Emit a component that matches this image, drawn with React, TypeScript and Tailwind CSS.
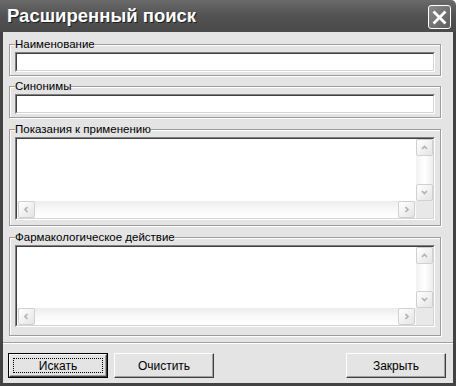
import React from 'react';

const font = "font-['Liberation_Sans',Arial,sans-serif]";

const Chevron = ({ dir }: { dir: 'up' | 'down' | 'left' | 'right' }) => {
  const pts = {
    up: '1,5 3.5,2.5 6,5',
    down: '1,2 3.5,4.5 6,2',
    left: '4.5,1 2,3.5 4.5,6',
    right: '2.5,1 5,3.5 2.5,6',
  }[dir];
  return (
    <svg width="7" height="7" viewBox="0 0 7 7">
      <polyline points={pts} fill="none" stroke="#b2b2b2" strokeWidth="1.7" />
    </svg>
  );
};

const ScrollBtn = ({ dir }: { dir: 'up' | 'down' | 'left' | 'right' }) => (
  <div className="w-[17px] h-[17px] shrink-0 rounded-[2px] border border-[#d0d0d0] bg-gradient-to-br from-white to-[#e4e4e4] flex items-center justify-center">
    <Chevron dir={dir} />
  </div>
);

const Edit = () => (
  <div className="h-[20px] border border-t-[#808080] border-l-[#808080] border-r-white border-b-white">
    <div className="h-full bg-white border border-t-[#404040] border-l-[#404040] border-r-[#d4d4d4] border-b-[#d4d4d4]" />
  </div>
);

const Memo = ({ h }: { h: string }) => (
  <div className={`${h} border border-t-[#808080] border-l-[#808080] border-r-white border-b-white`}>
    <div className="h-full bg-white border border-t-[#404040] border-l-[#404040] border-r-[#d4d4d4] border-b-[#d4d4d4] grid grid-cols-[1fr_17px] grid-rows-[1fr_17px]">
      <div />
      <div className="flex flex-col bg-gradient-to-r from-[#f2f2f2] via-white to-[#ededed]">
        <ScrollBtn dir="up" />
        <div className="flex-1" />
        <ScrollBtn dir="down" />
      </div>
      <div className="flex bg-gradient-to-b from-[#ececec] via-[#f9f9f9] to-white px-[1px]">
        <ScrollBtn dir="left" />
        <div className="flex-1" />
        <ScrollBtn dir="right" />
      </div>
      <div className="bg-[#e8e8e8]" />
    </div>
  </div>
);

const Group = ({ title, className, children }: { title: string; className: string; children: React.ReactNode }) => (
  <fieldset className={`border border-[#9c9c9c] px-[5px] pt-[1px] shadow-[inset_1px_1px_0_#fff,1px_1px_0_#fff] ${className}`}>
    <legend className="bg-[#e4e4e4] text-[11.5px] leading-[13px] text-black">{title}</legend>
    {children}
  </fieldset>
);

const Button = ({ label, main }: { label: string; main?: boolean }) => {
  const face = (
    <div className="relative h-full bg-[#e4e4e4] border border-t-white border-l-white border-r-[#404040] border-b-[#404040] shadow-[inset_-1px_-1px_0_#a0a0a0] flex items-center justify-center text-[12px] text-black">
      {main && <div className="absolute inset-[3px] border border-dotted border-black" />}
      <span className="relative">{label}</span>
    </div>
  );
  if (main) return <div className="w-[100px] h-[25px] border border-black">{face}</div>;
  return <div className="w-[100px] h-[25px]">{face}</div>;
};

export default function App() {
  return (
    <div className={`w-[456px] h-[386px] flex flex-col overflow-hidden ${font}`}>
      <div className="h-[32px] shrink-0 flex items-center justify-between pl-[7px] pr-[5px] rounded-tr-[5px] bg-gradient-to-b from-[#6a6a6a] via-[#525252] to-[#4a4a4a]">
        <span className="text-white font-bold text-[18.5px] leading-none [text-shadow:1px_1px_0_#1e1e1e]">Расширенный поиск</span>
        <div className="w-[23px] h-[24px] mt-[2px] rounded-[3px] border border-white bg-gradient-to-br from-[#8a8a8a] to-[#5e5e5e] flex items-center justify-center">
          <svg width="15" height="15" viewBox="0 0 15 15">
            <path d="M2.5 2.5 L12.5 12.5 M12.5 2.5 L2.5 12.5" stroke="#fff" strokeWidth="2.8" strokeLinecap="square" />
          </svg>
        </div>
      </div>

      <div className="flex-1 flex flex-col bg-[#e4e4e4] border-x-[3px] border-b-[3px] border-[#434343]">
        <div className="flex flex-col pl-[6px] pr-[12px] pt-[6px]">
          <Group title="Наименование" className="pb-[3px]">
            <Edit />
          </Group>
          <Group title="Синонимы" className="mt-[4px] pb-[3px]">
            <Edit />
          </Group>
          <Group title="Показания к применению" className="mt-[5px] pb-[5px]">
            <Memo h="h-[83px]" />
          </Group>
          <Group title="Фармакологическое действие" className="mt-[5px] pb-[8px]">
            <Memo h="h-[82px]" />
          </Group>
        </div>

        <div className="mt-[6px] h-[2px] border-t border-t-[#a0a0a0] border-b border-b-white" />

        <div className="flex items-center pl-[5px] pr-[7px] mt-[9px]">
          <Button label="Искать" main />
          <div className="ml-[6px]">
            <Button label="Очистить" />
          </div>
          <div className="ml-auto">
            <Button label="Закрыть" />
          </div>
        </div>
      </div>
    </div>
  );
}
